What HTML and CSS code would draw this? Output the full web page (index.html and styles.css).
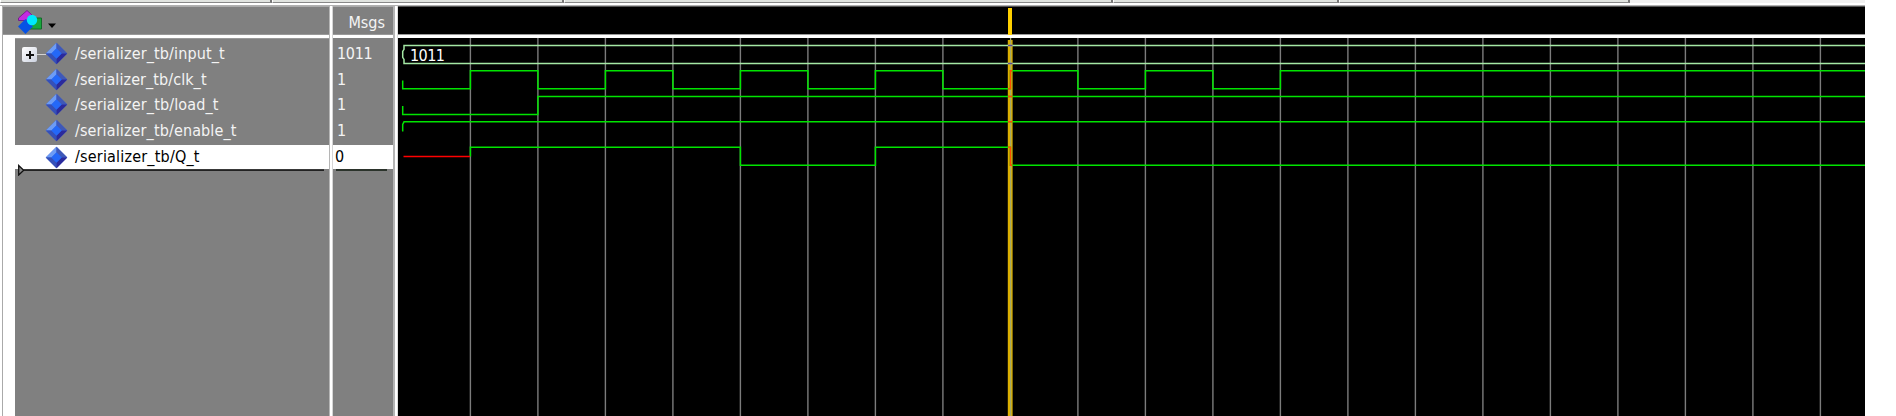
FILE: index.html
```html
<!DOCTYPE html>
<html lang="en">
<head>
<meta charset="utf-8">
<title>Wave</title>
<link rel="stylesheet" href="styles.css">
</head>
<body>
<svg class="defs" width="0" height="0">
  <symbol id="gem" viewBox="0 0 24 24">
    <path fill="#3e5fc8" d="M12 .8 23.2 12 12 23.2.8 12Z"/>
    <path fill="#6d9cf5" d="M12 .8V7L7 12H.8Z"/>
    <path fill="#3f58b8" d="M12 .8 23.2 12H17L12 7Z"/>
    <path fill="#3550b8" d="M.8 12H7l5 5v6.200Z"/>
    <path fill="#2b2a9c" d="M23.2 12 12 23.200V17l5-5Z"/>
    <path fill="#2468f8" d="m12 6.500 5.500 5.500-5.500 5.500L6.500 12Z"/>
  </symbol>
</svg>
<div class="tabs"><i class="t1"></i><i class="t2"></i><i class="t3"></i><i class="t4"></i><i class="t5"></i></div>
<main class="wave">
  <section class="names">
    <header class="head">
      <svg class="logo" width="42" height="28" viewBox="0 0 42 28">
        <path d="M14 12h12.500v11H14z" fill="#18a83c" stroke="#126b2a"/>
        <path d="m12 4.500 5 4.500-6 5.500H3.500V12Z" fill="#c42ae0" stroke="#74208a"/>
        <path d="m10.500 13 7.500 7.500-7.500 7.500L3 20.500Z" fill="#0652e4"/>
        <circle cx="17" cy="14" r="5.200" fill="#00e8fc"/>
        <path d="M33 17.500h8l-4 4.500Z" fill="#000"/>
      </svg>
    </header>
    <div class="list">
      <div class="row"><span class="plus"></span><svg class="gem"><use href="#gem"/></svg><span class="w1">/serializer_tb/input_t</span></div>
      <div class="row"><svg class="gem"><use href="#gem"/></svg><span class="w2">/serializer_tb/clk_t</span></div>
      <div class="row"><svg class="gem"><use href="#gem"/></svg><span class="w3">/serializer_tb/load_t</span></div>
      <div class="row"><svg class="gem"><use href="#gem"/></svg><span class="w4">/serializer_tb/enable_t</span></div>
      <div class="row sel"><svg class="gem"><use href="#gem"/></svg><span class="w5">/serializer_tb/Q_t</span></div>
      <svg class="insert" width="308" height="12" viewBox="0 0 308 12"><path d="M2.700 1.500v9.500l5-4.700Z" fill="#888" stroke="#111" stroke-width="1.300"/><path d="M8 6.200h300" stroke="#222" stroke-width="1.800"/></svg>
    </div>
  </section>
  <i class="split"></i>
  <section class="msgs">
    <header class="head">Msgs</header>
    <div class="list">
      <div class="row">1011</div><div class="row">1</div><div class="row">1</div><div class="row">1</div><div class="row sel">0</div>
      <i class="end"></i>
    </div>
  </section>
  <i class="split wide"></i>
  <section class="plot">
    <header class="head"><i class="cursor"></i></header>
    <svg class="traces" width="1467" height="378" viewBox="398 38 1467 378">
      <path d="M470.400 38V416M537.900 38V416M605.400 38V416M672.900 38V416M740.400 38V416M807.900 38V416M875.400 38V416M942.900 38V416M1077.900 38V416M1145.400 38V416M1212.900 38V416M1280.400 38V416M1347.900 38V416M1415.400 38V416M1482.900 38V416M1550.400 38V416M1617.900 38V416M1685.400 38V416M1752.900 38V416M1820.400 38V416" stroke="#7c7c7c" stroke-width="1.400"/>
      <path d="M1010.200 40V416" stroke="#dcb000" stroke-width="4.800"/>
      <path d="M1010.600 38V416" stroke="#a5a968" stroke-width="1.300"/>
      <g fill="none" stroke-width="1.500">
        <path d="M1865 45.400H404v4l-1.300 2v6l1.300 2v4H1865" stroke="#a4e8a4"/>
        <path d="M402.700 80.500v8.300H470.400V70.700h67.500v18h67.500v-18h67.500v18h67.500v-18h67.500v18h67.500v-18h67.500v18h67.500v-18h67.500v18h67.500v-18h67.500v18h67.500v-18H1865M402.700 106v8.400H537.900v-18H1865M402.700 131.500v-7l1.300-2.700H1865M470.400 156.500v-9.200h270v18h135v-18h135v18h855" stroke="#00e400"/>
        <path d="M403.500 156.400h66.500" stroke="#ff0000"/>
        <path d="M1008 88.700h2.400v-18h2M1008 96.400h4.500M1008 121.800h4.500M1008 147.300h2.400v18h2" stroke="#ff4a00"/>
        <path d="M1008 45.400h4.500M1008 63.400h4.500" stroke="#5b4691"/>
      </g>
      <text x="410" y="61" textLength="35" class="bus">1011</text>
    </svg>
  </section>
</main>
</body>
</html>
```
FILE: styles.css
```css
body { margin: 0; width: 1896px; height: 416px; overflow: hidden; background: #fff; color: #f4f4f4; font: 16px/25.5px "DejaVu Sans Condensed", "DejaVu Sans", sans-serif; font-stretch: condensed; }
.defs { position: absolute; }
.tabs { display: flex; box-sizing: border-box; width: 1865px; height: 3px; background: #f0f0f0; }
.tabs i { box-sizing: border-box; height: 3px; background: #e0e3df; border-left: 1px solid #fff; border-right: 2px solid #777; border-bottom: 1px solid #888; }
.t1 { width: 272px; }
.t2 { width: 292px; }
.t3 { width: 549px; }
.t4 { width: 226px; }
.t5 { width: 291px; }
.wave { display: flex; box-sizing: border-box; width: 1865px; height: 413px; padding: 3px 0 0 2px; background: linear-gradient(#fff 2px, #b0b0b0 2px, #b0b0b0 3px, #fff 3px); }
section { display: flex; flex-direction: column; }
.head { box-sizing: border-box; height: 29px; background: #808080; border-top: 1px solid #aaa; border-bottom: 1px solid #999; flex: none; }
.list { box-sizing: border-box; position: relative; height: 378px; margin-top: 3px; padding-top: 3px; background: #808080; }
.row { display: flex; align-items: center; height: 25.5px; white-space: nowrap; }
.sel { box-sizing: border-box; height: 24px; margin-top: 2px; background: #fff; color: #000; }
.names { width: 327px; border-left: 1px solid #aaa; box-sizing: border-box; }
.names .list { margin-left: 12px; border-top: 1px solid #999; padding-top: 2px; }
.names .row { padding-left: 30px; }
.logo { display: block; margin: -1px 0 0 12px; overflow: visible; }
.gem { width: 23px; height: 23px; flex: none; margin-right: 7px; }
.plus { width: 15px; height: 15px; flex: none; margin: 1px 8px 0 -23px; border-radius: 2px; position: relative; background: linear-gradient(#111, #111) 4px 7px / 8px 2px no-repeat, linear-gradient(#111, #111) 7px 4px / 2px 8px no-repeat, linear-gradient(135deg, #fff, #ccd2df); }
.plus::after { content: ""; position: absolute; left: 15px; top: 7px; width: 9px; height: 1px; background: #d4d4d4; }
.w1 { letter-spacing: .13px; }
.w2 { letter-spacing: .07px; }
.w3 { letter-spacing: .14px; }
.w4 { letter-spacing: .12px; }
.w5 { letter-spacing: .19px; }
.insert { position: absolute; left: 1px; top: 125px; }
.split { width: 4px; background: linear-gradient(90deg, #b5b5b5 1px, #fff 1px, #fff 3px, #d5d5d5 3px); }
.msgs { width: 60px; }
.msgs .head { padding: 3px 8px 0 0; text-align: right; letter-spacing: 0; }
.msgs .row { padding-left: 4px; letter-spacing: -.3px; }
.msgs .sel { padding-left: 2px; }
.end { display: block; width: 51px; height: 2px; margin-left: 3px; background: #2b332b; }
.split.wide { width: 5px; background: linear-gradient(90deg, #b5b5b5 2px, #fff 2px, #fff 4px, #ddd 4px); }
.plot { width: 1467px; }
.plot .head { background: #000; padding: 1px 0 0 610px; border-top-color: #555; }
.cursor { display: block; width: 4px; height: 27px; background: #ffd000; }
.traces { display: block; margin-top: 3px; background: #000; }
.bus { fill: #fff; font: 16px "DejaVu Sans Condensed", "DejaVu Sans", sans-serif; }
```
